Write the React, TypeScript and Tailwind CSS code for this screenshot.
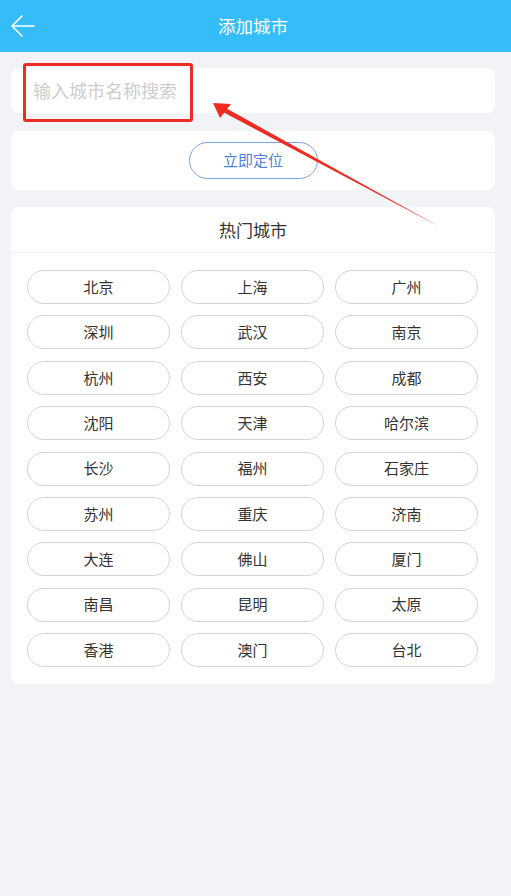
import React from "react";

const cities = [
  "北京", "上海", "广州",
  "深圳", "武汉", "南京",
  "杭州", "西安", "成都",
  "沈阳", "天津", "哈尔滨",
  "长沙", "福州", "石家庄",
  "苏州", "重庆", "济南",
  "大连", "佛山", "厦门",
  "南昌", "昆明", "太原",
  "香港", "澳门", "台北",
];

export default function App() {
  return (
    <div
      className="relative w-[511px] h-[896px] bg-[#f2f3f7] overflow-hidden"
      style={{ fontFamily: '"Noto Sans CJK SC", "Noto Sans", sans-serif' }}
    >
      <div className="h-[52px] bg-[#34bdf9] flex items-center relative">
        <svg className="absolute left-[10px] top-[14px]" width="26" height="24" viewBox="0 0 26 24" fill="none">
          <path d="M24 12H2M12 2L2 12L12 22" stroke="white" strokeWidth="1.6" strokeLinecap="round" strokeLinejoin="round" />
        </svg>
        <div className="w-full text-center text-white text-[17.5px] leading-none pr-[5px]">添加城市</div>
      </div>

      <div className="pl-[11px] pr-[16px] pt-[16px] flex flex-col">
        <div className="h-[45px] bg-white rounded-[8px] flex items-center pl-[22px]">
          <span className="text-[18px] text-[#cdcdcd]">输入城市名称搜索</span>
        </div>

        <div className="mt-[18px] h-[59px] bg-white rounded-[8px] flex items-center justify-center">
          <div className="w-[129px] h-[37px] rounded-full border border-[#7f9fe6] flex items-center justify-center text-[15px] text-[#4f7fdc]">
            立即定位
          </div>
        </div>

        <div className="mt-[17px] bg-white rounded-[8px] pb-[17px]">
          <div className="h-[46px] flex items-center justify-center text-[17px] text-[#333] border-b border-[#f0f0f0]">
            热门城市
          </div>
          <div className="grid grid-cols-3 gap-x-[11px] gap-y-[11.4px] pl-[16px] pr-[17px] pt-[17px]">
            {cities.map((c) => (
              <div
                key={c}
                className="h-[34px] rounded-full border-[1.5px] border-[#d4d4d4] flex items-center justify-center text-[15px] text-[#333]"
              >
                {c}
              </div>
            ))}
          </div>
        </div>
      </div>

      <div className="absolute left-[23px] top-[63px] w-[170px] h-[59px] border-[3px] border-[#ee2c24] rounded-[3px]" />

      <svg className="absolute left-0 top-0 pointer-events-none" width="511" height="896" viewBox="0 0 511 896">
        <polygon points="440,227 221,111 223,106.5" fill="#ee2c24" />
        <polygon points="213,103 231,104 220,118" fill="#ee2c24" />
      </svg>
    </div>
  );
}
